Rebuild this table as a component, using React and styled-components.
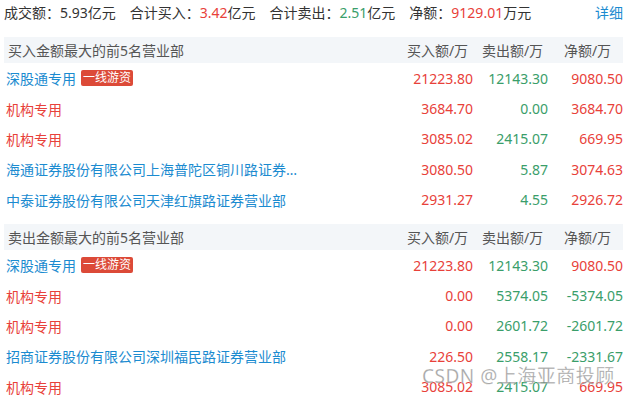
import React from "react";
import styled, { createGlobalStyle } from "styled-components";

const GlobalStyle = createGlobalStyle`
  html, body {
    margin: 0;
    padding: 0;
    background: #fff;
  }
  body {
    font-family: "Noto Sans", "Noto Sans CJK SC", sans-serif;
    font-size: 14px;
    color: #333;
    overflow: hidden;
  }
`;

const RED = "#e8413a";
const GREEN = "#3a9e6a";
const BLUE = "#1b8bd0";

const Page = styled.div`
  position: relative;
  width: 630px;
  height: 396px;
  padding: 0 7px 0 4px;
  box-sizing: border-box;
  overflow: hidden;
`;

const Summary = styled.div`
  display: flex;
  align-items: center;
  height: 26px;
  line-height: 26px;
  white-space: nowrap;
`;

const Stat = styled.span`
  margin-right: 14px;
`;

const Value = styled.span`
  color: ${(p) => p.$color};
`;

const Detail = styled.a`
  margin-left: auto;
  color: ${BLUE};
  text-decoration: none;
`;

const Section = styled.div`
  margin-top: ${(p) => p.$top}px;
`;

const Grid = styled.div`
  display: grid;
  grid-template-columns: 1fr 75px 75px 75px;
  align-items: center;
`;

const HeadRow = styled(Grid)`
  height: 26px;
  background: #f3f6f9;
  color: #555;
`;

const HeadCell = styled.div`
  padding-left: ${(p) => (p.$first ? 4 : 4)}px;
  text-align: ${(p) => (p.$first ? "left" : "center")};
  white-space: nowrap;
`;

const Row = styled(Grid)`
  height: 30.4px;
`;

const Name = styled.div`
  display: flex;
  align-items: center;
  padding-left: 2px;
  min-width: 0;
  color: ${(p) => (p.$inst ? RED : BLUE)};
  white-space: nowrap;
`;

const NameText = styled.span`
  overflow: hidden;
  text-overflow: ellipsis;
  max-width: 292px;
`;

const Badge = styled.span`
  margin-left: 5px;
  padding: 0 2px;
  height: 16px;
  line-height: 16px;
  font-size: 12px;
  color: #fff;
  background: #dc4a38;
  border-radius: 2px;
`;

const Num = styled.div`
  text-align: right;
  color: ${(p) => p.$color};
  white-space: nowrap;
`;

const Watermark = styled.div`
  position: absolute;
  left: 422px;
  top: 361px;
  font-family: "Noto Sans", "Noto Sans CJK SC", sans-serif;
  font-size: 19px;
  color: rgba(140, 140, 140, 0.75);
  -webkit-text-stroke: 0.3px rgba(255, 255, 255, 0.6);
  letter-spacing: 0.5px;
  white-space: nowrap;
  pointer-events: none;
`;

const colorOf = (v) => (v.startsWith("-") ? GREEN : RED);

const buyRows = [
  { name: "深股通专用", badge: "一线游资", buy: "21223.80", sell: "12143.30", net: "9080.50" },
  { name: "机构专用", inst: true, buy: "3684.70", sell: "0.00", net: "3684.70" },
  { name: "机构专用", inst: true, buy: "3085.02", sell: "2415.07", net: "669.95" },
  { name: "海通证券股份有限公司上海普陀区铜川路证券营业部", buy: "3080.50", sell: "5.87", net: "3074.63" },
  { name: "中泰证券股份有限公司天津红旗路证券营业部", buy: "2931.27", sell: "4.55", net: "2926.72" },
];

const sellRows = [
  { name: "深股通专用", badge: "一线游资", buy: "21223.80", sell: "12143.30", net: "9080.50" },
  { name: "机构专用", inst: true, buy: "0.00", sell: "5374.05", net: "-5374.05" },
  { name: "机构专用", inst: true, buy: "0.00", sell: "2601.72", net: "-2601.72" },
  { name: "招商证券股份有限公司深圳福民路证券营业部", buy: "226.50", sell: "2558.17", net: "-2331.67" },
  { name: "机构专用", inst: true, buy: "3085.02", sell: "2415.07", net: "669.95" },
];

const Table = ({ title, rows, top }) => (
  <Section $top={top}>
    <HeadRow>
      <HeadCell $first>{title}</HeadCell>
      <HeadCell>买入额/万</HeadCell>
      <HeadCell>卖出额/万</HeadCell>
      <HeadCell>净额/万</HeadCell>
    </HeadRow>
    {rows.map((r, i) => (
      <Row key={i}>
        <Name $inst={r.inst}>
          <NameText>{r.name}</NameText>
          {r.badge && <Badge>{r.badge}</Badge>}
        </Name>
        <Num $color={RED}>{r.buy}</Num>
        <Num $color={GREEN}>{r.sell}</Num>
        <Num $color={colorOf(r.net)}>{r.net}</Num>
      </Row>
    ))}
  </Section>
);

export default function App() {
  return (
    <>
      <GlobalStyle />
      <Page>
        <Summary>
          <Stat>成交额：5.93亿元</Stat>
          <Stat>合计买入：<Value $color={RED}>3.42</Value>亿元</Stat>
          <Stat>合计卖出：<Value $color={GREEN}>2.51</Value>亿元</Stat>
          <Stat>净额：<Value $color={RED}>9129.01</Value>万元</Stat>
          <Detail>详细</Detail>
        </Summary>
        <Table title="买入金额最大的前5名营业部" rows={buyRows} top={11} />
        <Table title="卖出金额最大的前5名营业部" rows={sellRows} top={9} />
        <Watermark>CSDN @上海亚商投顾</Watermark>
      </Page>
    </>
  );
}
